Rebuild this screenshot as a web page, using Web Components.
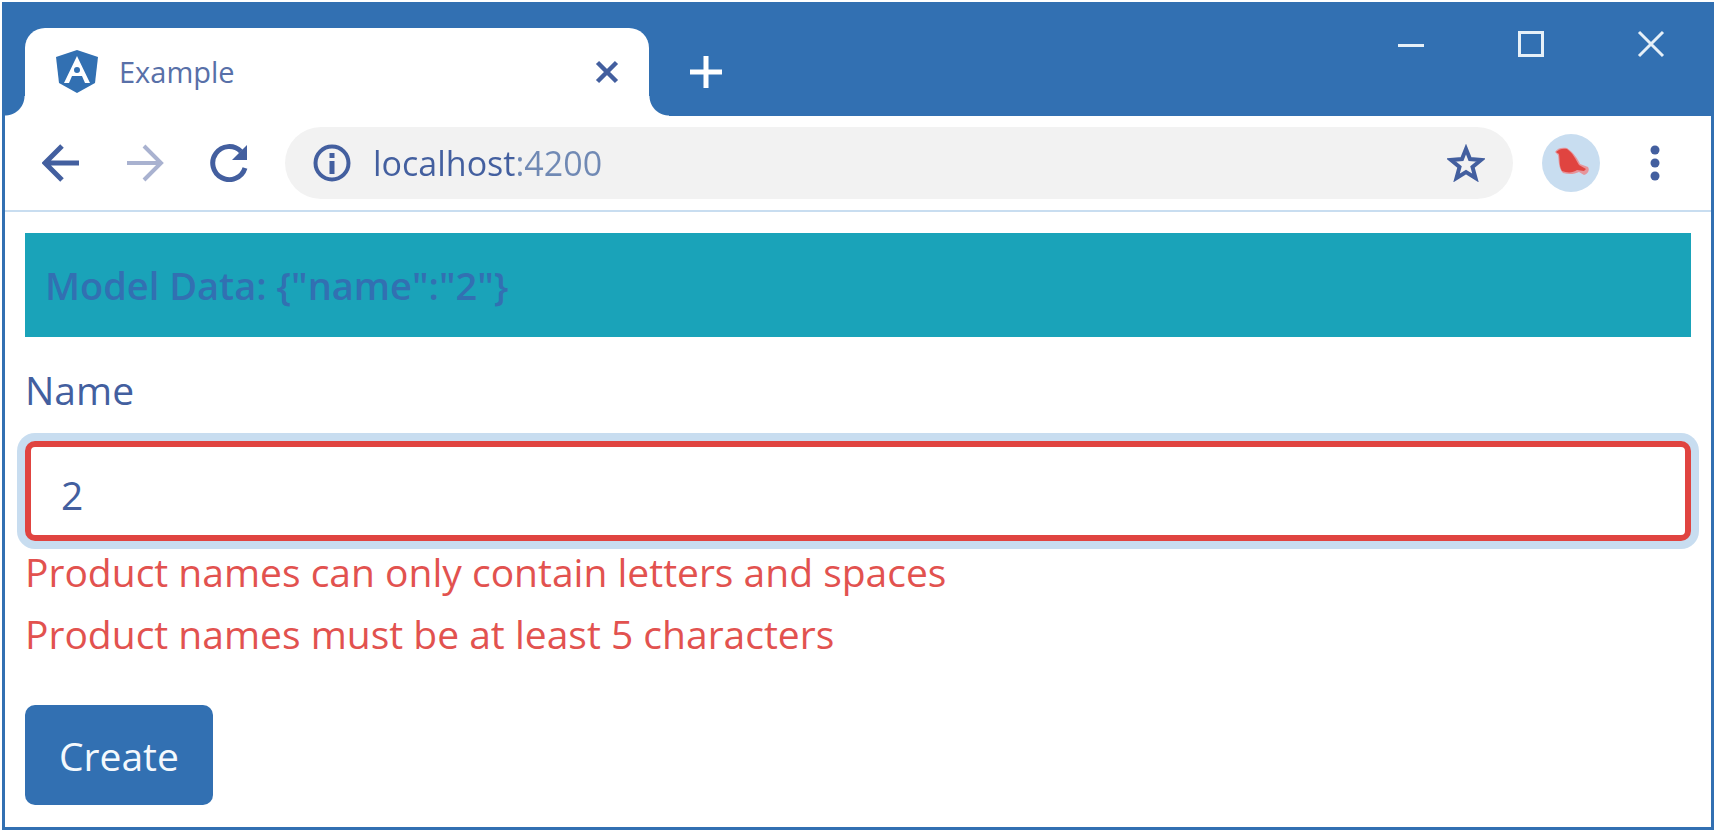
<!DOCTYPE html>
<html lang="en">
<head>
<meta charset="utf-8">
<meta name="viewport" content="width=device-width, initial-scale=1">
<title>Example</title>
<style>
  body {
    margin: 0;
    background: #fff;
    font-family: "Open Sans", "Noto Sans", sans-serif;
    --blue: #3270b2;
    --ink: #435f9f;
    --muted: #7089b4;
    --pale: #c8ddf0;
    --red: #e04440;
    --teal: #1aa3b9;
    --pill: #f2f2f2;
    color: var(--ink);
  }
</style>
</head>
<body>
<browser-window>
  <browser-tab slot="tab">Example</browser-tab>
  <browser-toolbar slot="toolbar" address="localhost:4200"></browser-toolbar>
  <model-banner>Model Data: {"name":"2"}</model-banner>
  <product-form label="Name" value="2">
    <form-error slot="errors">Product names can only contain letters and spaces</form-error>
    <form-error slot="errors">Product names must be at least 5 characters</form-error>
    <span slot="action">Create</span>
  </product-form>
</browser-window>

<script>
const define = (name, html, setup) => customElements.define(name, class extends HTMLElement {
  constructor() {
    super();
    const t = document.createElement('template');
    t.innerHTML = html;
    this.attachShadow({ mode: 'open' }).append(t.content.cloneNode(true));
  }
  connectedCallback() { if (setup) setup(this, this.shadowRoot); }
});

const base = `
  * { box-sizing: border-box; }
  button { display: grid; place-items: center; margin: 0; padding: 0; border: 0; background: none; color: inherit; font: inherit; }
  svg { display: block; }
`;

define('form-error', `
  <style>:host { display: block; font-size: 39px; line-height: 62px; color: #e2524f; }</style>
  <slot></slot>`);

define('model-banner', `
  <style>
    :host { display: block; padding: 20px; background: var(--teal); color: var(--blue);
      font-size: 38px; line-height: 64px; font-weight: 600; }
  </style>
  <slot></slot>`);

define('browser-tab', `
  <style>${base}
    :host { position: relative; display: flex; align-items: center; box-sizing: border-box; width: 624px; height: 88px;
      padding: 0 30px; gap: 20px; background: #fff; border-radius: 20px 20px 0 0; font-size: 29px; line-height: 40px; color: #5870a8; }
    :host::before, :host::after { content: ""; position: absolute; bottom: 0; width: 20px; height: 20px; }
    :host::before { right: 100%; background: radial-gradient(circle at 0 0, var(--blue) 19px, #fff 20px); }
    :host::after { left: 100%; background: radial-gradient(circle at 100% 0, var(--blue) 19px, #fff 20px); }
    .title { flex: 1; }
    button { width: 24px; height: 24px; color: var(--ink); }
  </style>
  <svg width="44" height="44" viewBox="0 0 44 44" aria-hidden="true">
    <path fill="#3270b2" d="M22 0 43 7 40 33 22 43 4 33 1 7Z"/>
    <path fill="#fff" fill-rule="evenodd" d="M22 6 35 33H30L27 26H17L14 33H9ZM22 17a3 3 0 1 0 0 6a3 3 0 1 0 0-6Z"/>
  </svg>
  <span class="title"><slot></slot></span>
  <button aria-label="Close tab"><svg width="24" height="24" viewBox="0 0 24 24" fill="none" stroke="currentColor" stroke-width="4.500"><path d="M2.500 2.500 21.500 21.500M21.500 2.500 2.500 21.500"/></svg></button>`);

define('browser-toolbar', `
  <style>${base}
    :host { display: flex; align-items: center; box-sizing: border-box; height: 96px; padding: 0 28px 0 14px;
      border-bottom: 2px solid var(--pale); }
    nav { display: flex; }
    nav button { width: 84px; height: 72px; }
    .fwd { color: #a9b2d0; }
    .address { display: flex; align-items: center; flex: 1; height: 72px; margin-left: 14px; padding: 0 28px;
      gap: 22px; border-radius: 36px; background: var(--pill); }
    input { flex: 1; min-width: 0; height: 56px; padding: 0; border: 0; outline: 0; font: inherit; font-size: 34px;
      color: var(--ink); -webkit-text-fill-color: transparent;
      background: linear-gradient(90deg, var(--ink) 145px, var(--muted) 145px); -webkit-background-clip: text; background-clip: text; }
    .avatar { margin-left: 29px; }
    .menu { width: 56px; height: 56px; margin-left: 27px; }
  </style>
  <nav aria-label="History">
    <button aria-label="Back"><svg width="38" height="38" viewBox="0 0 38 38" fill="none" stroke="currentColor" stroke-width="5"><path d="M37 19H4M20 2 3 19 20 36"/></svg></button>
    <button class="fwd" aria-label="Forward"><svg width="38" height="38" viewBox="0 0 38 38" fill="none" stroke="currentColor" stroke-width="4"><path d="M1 19H34M18 2 35 19 18 36"/></svg></button>
    <button aria-label="Reload"><svg width="38" height="38" viewBox="0 0 38 38" fill="none" stroke="currentColor" stroke-width="5"><path d="M35 24A16.500 16.500 0 1 1 31 7.500"/><path fill="currentColor" stroke="none" d="M37 1V16H22Z"/></svg></button>
  </nav>
  <div class="address">
    <svg width="38" height="38" viewBox="0 0 38 38" aria-hidden="true"><circle cx="19" cy="19" r="16.500" fill="none" stroke="currentColor" stroke-width="4"/><path fill="currentColor" d="M16.500 17h5v13h-5zM16.500 9h5v5h-5z"/></svg>
    <input type="text" aria-label="Address" spellcheck="false">
    <button aria-label="Bookmark this page"><svg width="38" height="38" viewBox="0 0 38 38" fill="none" stroke="currentColor" stroke-width="4"><path d="M19 5 23 15 34 16 25.500 23 28.500 34 19 28 9.500 34 12.500 23 4 16 15 15Z"/></svg></button>
  </div>
  <button class="avatar" aria-label="Profile"><svg width="58" height="58" viewBox="0 0 58 58"><circle cx="29" cy="29" r="29" fill="#c8ddf0"/><path fill="#e6959b" d="M13 18C15 14 20 13 25 14C31 18 36 25 38 30L46 33C48 36 46 40 42 41L37 38C33 40 27 41 21 39C16 34 17 26 16 21Z"/><path fill="#e04440" d="M14 18C17 15 21 14 25 15C31 19 34 26 37 31L44 35L42 37L35 36C31 39 25 39 20 37C17 32 18 26 17 20Z"/></svg></button>
  <button class="menu" aria-label="Menu"><svg width="10" height="36" viewBox="0 0 10 36" fill="currentColor"><circle cx="5" cy="5" r="4.500"/><circle cx="5" cy="18" r="4.500"/><circle cx="5" cy="31" r="4.500"/></svg></button>`,
  (host, root) => { root.querySelector('input').value = host.getAttribute('address'); });

define('product-form', `
  <style>${base}
    :host { display: block; font-size: 39px; }
    form { display: flex; flex-direction: column; align-items: stretch; }
    label { line-height: 62px; margin: 22px 0 20px; }
    input { height: 100px; padding: 6px 30px 0; border: 6px solid var(--red); border-radius: 10px; outline: 0;
      box-shadow: 0 0 0 8px var(--pale); background: #fff; color: var(--ink); font: inherit; }
    .errors { margin-bottom: 40px; }
    button { align-self: flex-start; height: 100px; padding: 0 34px; border-radius: 10px; background: var(--blue); color: #f4f9fd; }
  </style>
  <form>
    <label for="name"></label>
    <input id="name" type="text" aria-describedby="errors">
    <div class="errors" id="errors"><slot name="errors"></slot></div>
    <button type="button"><slot name="action"></slot></button>
  </form>`,
  (host, root) => {
    root.querySelector('label').textContent = host.getAttribute('label');
    root.querySelector('input').value = host.getAttribute('value');
  });

define('browser-window', `
  <style>${base}
    :host { display: flex; flex-direction: column; box-sizing: border-box; min-height: calc(100vh - 4px); margin: 2px;
      border: 3px solid var(--blue); background: #fff; }
    header { display: flex; align-items: flex-end; height: 111px; padding-left: 20px; background: var(--blue); color: #e6f0f8; }
    .new { width: 60px; height: 88px; margin-left: 27px; color: #fff; }
    .controls { display: flex; align-self: flex-start; margin-left: auto; }
    .controls button { width: 120px; height: 78px; }
    main { padding: 21px 20px; }
  </style>
  <header>
    <slot name="tab"></slot>
    <button class="new" aria-label="New tab"><svg width="32" height="32" viewBox="0 0 32 32" stroke="currentColor" stroke-width="5"><path d="M16 0V32M0 16H32"/></svg></button>
    <div class="controls">
      <button aria-label="Minimize"><svg width="28" height="28" viewBox="0 0 28 28" stroke="currentColor" stroke-width="3"><path d="M1 15.500H27"/></svg></button>
      <button aria-label="Maximize"><svg width="28" height="28" viewBox="0 0 28 28" fill="none" stroke="currentColor" stroke-width="3"><path d="M2.500 2.500H25.500V25.500H2.500Z"/></svg></button>
      <button aria-label="Close window"><svg width="28" height="28" viewBox="0 0 28 28" stroke="currentColor" stroke-width="3"><path d="M2 2 26 26M26 2 2 26"/></svg></button>
    </div>
  </header>
  <slot name="toolbar"></slot>
  <main><slot></slot></main>`);
</script>
</body>
</html>
